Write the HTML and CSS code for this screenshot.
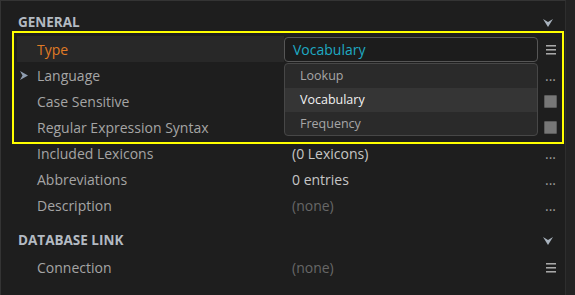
FILE: index.html
```html
<!DOCTYPE html>
<html lang="en">
<head>
    <meta charset="UTF-8">
    <title>Properties</title>
    <link rel="stylesheet" href="styles.css">
</head>
<body>
    <div class="panel">
        <!-- General section -->
        <div class="section-head">
            <span>GENERAL</span>
            <svg class="collapse" width="10" height="8" viewBox="0 0 10 8"><path d="M0 0 L5 3 L10 0 L5 8 Z"/></svg>
        </div>

        <div class="row">
            <div class="name current"><span class="arrow"></span>Type</div>
            <div class="value">
                <div class="combo">Vocabulary</div>
                <ul class="dropdown">
                    <li>Lookup</li>
                    <li class="selected">Vocabulary</li>
                    <li>Frequency</li>
                </ul>
            </div>
            <div class="action"><span class="menu-icon"><i></i><i></i><i></i></span></div>
        </div>
        <div class="row">
            <div class="name">
                <span class="arrow"><svg width="8" height="9" viewBox="0 0 8 9"><path d="M0 0 L8 4.5 L0 9 L2.5 4.5 Z"/></svg></span>Language
            </div>
            <div class="value"></div>
            <div class="action"><span class="dots">...</span></div>
        </div>
        <div class="row">
            <div class="name"><span class="arrow"></span>Case Sensitive</div>
            <div class="value"></div>
            <div class="action"><span class="check"></span></div>
        </div>
        <div class="row">
            <div class="name"><span class="arrow"></span>Regular Expression Syntax</div>
            <div class="value"></div>
            <div class="action"><span class="check"></span></div>
        </div>
        <div class="row">
            <div class="name"><span class="arrow"></span>Included Lexicons</div>
            <div class="value">(0 Lexicons)</div>
            <div class="action"><span class="dots">...</span></div>
        </div>
        <div class="row">
            <div class="name"><span class="arrow"></span>Abbreviations</div>
            <div class="value">0 entries</div>
            <div class="action"><span class="dots">...</span></div>
        </div>
        <div class="row">
            <div class="name"><span class="arrow"></span>Description</div>
            <div class="value empty">(none)</div>
            <div class="action"><span class="dots">...</span></div>
        </div>

        <!-- Database link section -->
        <div class="section-head second">
            <span>DATABASE LINK</span>
            <svg class="collapse" width="10" height="8" viewBox="0 0 10 8"><path d="M0 0 L5 3 L10 0 L5 8 Z"/></svg>
        </div>
        <div class="row">
            <div class="name"><span class="arrow"></span>Connection</div>
            <div class="value empty">(none)</div>
            <div class="action"><span class="menu-icon"><i></i><i></i><i></i></span></div>
        </div>

        <div class="highlight"></div>
    </div>
</body>
</html>
```

FILE: styles.css
```css
* {
    margin: 0;
    padding: 0;
    box-sizing: border-box;
}

body {
    background: #232323;
    font-family: 'Open Sans', sans-serif;
    width: 575px;
    height: 295px;
    overflow: hidden;
}

.panel {
    position: relative;
    width: 566px;
    height: 295px;
    background: #1e1e1e;
    border-left: 1px solid #343434;
    border-top: 1px solid #343434;
    border-right: 1px solid #2e2e2e;
}

.section-head {
    display: flex;
    align-items: center;
    justify-content: space-between;
    height: 20px;
    margin: 11px 0 4px;
    padding: 0 12px 0 17px;
    font-size: 13.5px;
    font-weight: 700;
    color: #b3bac2;
}

.section-head.second {
    margin-top: 12px;
}

.collapse {
    fill: #a9b3be;
    margin-top: 2px;
}

.row {
    display: flex;
    height: 26px;
    align-items: center;
    font-size: 14px;
}

.name {
    display: flex;
    align-items: center;
    width: 267px;
    height: 26px;
    margin-left: 16px;
    color: #a5a5a5;
}

.name.current {
    background: #282828;
    color: #e07b25;
}

.arrow {
    display: inline-flex;
    width: 20px;
    padding-left: 3px;
}

.arrow svg {
    fill: #8e9db0;
}

.value {
    position: relative;
    width: 254px;
    padding-left: 8px;
    color: #c6c6c6;
}

.value.empty {
    color: #676767;
}

.combo {
    height: 25px;
    margin-left: -8px;
    margin-top: 1px;
    padding: 1px 8px 0;
    line-height: 22px;
    border: 1px solid #565656;
    border-radius: 4px;
    background: #1c1c1c;
    color: #1fa9c3;
    font-size: 14px;
}

.dropdown {
    position: absolute;
    top: 27px;
    left: 0;
    width: 254px;
    height: 73px;
    list-style: none;
    padding: 0;
    background: #2a2a2a;
    border: 1px solid #474747;
    border-radius: 4px;
    overflow: hidden;
    z-index: 2;
}

.dropdown li {
    height: 24px;
    line-height: 24px;
    padding-left: 15px;
    font-size: 12.5px;
    color: #a6a6a6;
}

.dropdown li.selected {
    background: #353535;
    color: #f2f2f2;
}

.action {
    flex: 1;
    display: flex;
    justify-content: center;
    align-items: center;
    padding-right: 2px;
    height: 26px;
}

.menu-icon {
    display: flex;
    flex-direction: column;
    gap: 3px;
    width: 10px;
}

.menu-icon i {
    height: 1px;
    background: #a8a8a8;
    box-shadow: 0 1px 0 #6a6a6a;
}

.dots {
    font-size: 14px;
    color: #9c9c9c;
    line-height: 10px;
    margin-top: 2px;
}

.check {
    width: 13px;
    height: 13px;
    background: #777777;
    border: 1px solid #5b5b5b;
    border-radius: 1px;
}

.highlight {
    position: absolute;
    left: 11px;
    top: 30px;
    width: 552px;
    height: 113px;
    border: 2px solid #ffff00;
    pointer-events: none;
}
```
